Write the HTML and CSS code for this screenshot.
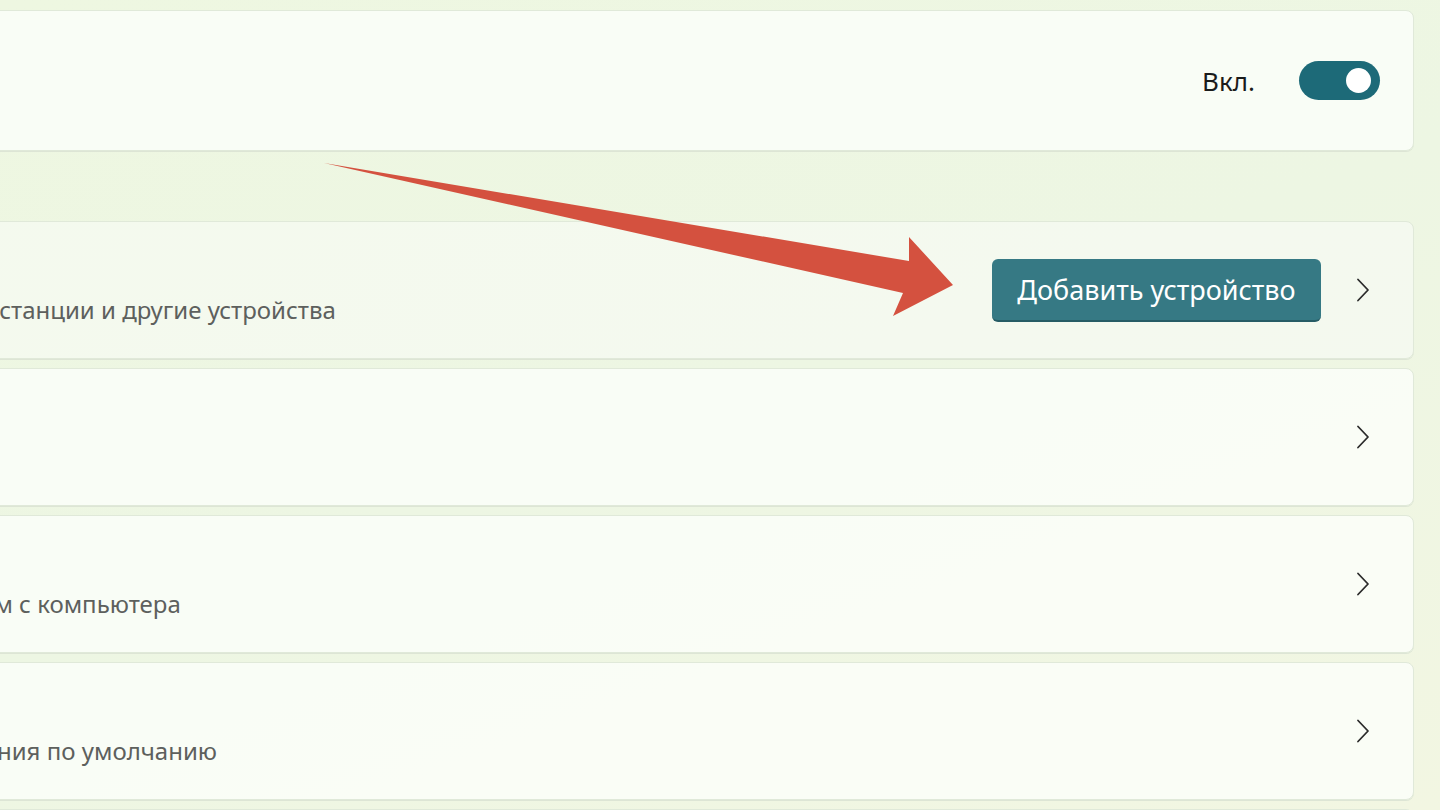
FILE: index.html
```html
<!DOCTYPE html>
<html lang="ru">
<head>
    <meta charset="UTF-8">
    <meta name="viewport" content="width=device-width, initial-scale=1.0">
    <title>Bluetooth и устройства</title>
    <link rel="stylesheet" href="styles.css">
</head>
<body>
    <div class="settings">
        <div class="card card-first">
            <div class="card-text">
                <div class="title">Bluetooth</div>
            </div>
            <span class="state">Вкл.</span>
            <span class="toggle"><span class="knob"></span></span>
        </div>

        <div class="card card-hover">
            <div class="card-text">
                <div class="title">Устройства</div>
                <div class="subtitle">Мышь, клавиатура, перо, аудио, дисплеи и док-станции и другие устройства</div>
            </div>
            <button class="add-button" type="button">Добавить устройство</button>
            <svg class="chevron" width="14" height="24" viewBox="0 0 14 24"><path d="M2 1.5 L12 12 L2 22.5" fill="none" stroke="#2b2b2b" stroke-width="1.8" stroke-linecap="round" stroke-linejoin="round"/></svg>
        </div>

        <div class="card">
            <div class="card-text">
                <div class="title">Принтеры и сканеры</div>
                <div class="subtitle">Настройки, устранение неполадок</div>
            </div>
            <svg class="chevron" width="14" height="24" viewBox="0 0 14 24"><path d="M2 1.5 L12 12 L2 22.5" fill="none" stroke="#2b2b2b" stroke-width="1.8" stroke-linecap="round" stroke-linejoin="round"/></svg>
        </div>

        <div class="card">
            <div class="card-text">
                <div class="title">Мобильные устройства</div>
                <div class="subtitle">Немедленный доступ к мобильным устройствам с компьютера</div>
            </div>
            <svg class="chevron" width="14" height="24" viewBox="0 0 14 24"><path d="M2 1.5 L12 12 L2 22.5" fill="none" stroke="#2b2b2b" stroke-width="1.8" stroke-linecap="round" stroke-linejoin="round"/></svg>
        </div>

        <div class="card">
            <div class="card-text">
                <div class="title">Камеры</div>
                <div class="subtitle">Подключенные камеры и параметры изображения по умолчанию</div>
            </div>
            <svg class="chevron" width="14" height="24" viewBox="0 0 14 24"><path d="M2 1.5 L12 12 L2 22.5" fill="none" stroke="#2b2b2b" stroke-width="1.8" stroke-linecap="round" stroke-linejoin="round"/></svg>
        </div>

        <div class="card">
            <div class="card-text">
                <div class="title">Мышь</div>
                <div class="subtitle">Кнопки, скорость указателя мыши, прокрутка</div>
            </div>
        </div>
    </div>

    <!-- red pointer arrow drawn over the list -->
    <svg class="pointer" width="1440" height="810" viewBox="0 0 1440 810">
        <polygon points="324,163 909,261 909,237 953,285 893,316 903,293" fill="#d4513f"/>
    </svg>
</body>
</html>
```

FILE: styles.css
```css
body {
    margin: 0;
    height: 810px;
    overflow: hidden;
    position: relative;
    font-family: "Noto Sans", "Open Sans", sans-serif;
    background: linear-gradient(160deg, #eef7e1 0%, #edf6e3 50%, #f2f6e2 100%);
}

.settings {
    display: flex;
    flex-direction: column;
    gap: 9px;
    margin: 10px 26px 0 -596px;
}

.card {
    display: flex;
    align-items: center;
    box-sizing: border-box;
    min-height: 138px;
    padding: 0 33px 0 37px;
    background: rgba(253, 255, 251, 0.78);
    border: 1px solid #e0e9d9;
    border-radius: 8px;
    box-shadow: 0 1px 0 #dde5d5;
}

.card-first {
    min-height: 141px;
    margin-bottom: 61px;
}

.card-hover {
    background: rgba(244, 249, 240, 0.9);
}

.card-text {
    flex: 1;
    display: flex;
    flex-direction: column;
    gap: 4px;
    white-space: nowrap;
}

.title {
    font-size: 28px;
    line-height: 36px;
    color: #1b1b1b;
}

.subtitle {
    font-size: 24px;
    line-height: 30px;
    color: #5d605d;
}

.state {
    font-size: 26px;
    color: #1b1b1b;
    margin-right: 44px;
}

.toggle {
    position: relative;
    width: 81px;
    height: 39px;
    border-radius: 20px;
    background-color: #1d6a78;
}

.knob {
    position: absolute;
    right: 9px;
    top: 7px;
    width: 25px;
    height: 25px;
    border-radius: 50%;
    background-color: #ffffff;
}

.add-button {
    width: 329px;
    height: 63px;
    border: none;
    border-bottom: 2px solid #265c65;
    border-radius: 6px;
    background-color: #367984;
    color: #ffffff;
    font-family: inherit;
    font-size: 27px;
    padding: 0;
}

.chevron {
    margin-left: 35px;
    margin-right: 10px;
}

.pointer {
    position: absolute;
    left: 0;
    top: 0;
    pointer-events: none;
}
```
